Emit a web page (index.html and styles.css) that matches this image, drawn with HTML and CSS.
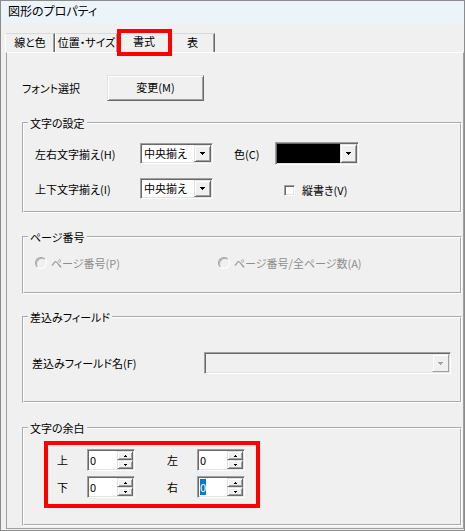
FILE: index.html
```html
<!DOCTYPE html>
<html lang="ja">
<head>
<meta charset="UTF-8">
<title>図形のプロパティ</title>
<link rel="stylesheet" href="styles.css">
</head>
<body>
<div class="window">
  <div class="titlebar">図形のプロパティ</div>
  <div class="client">
    <div class="tabs">
      <div class="tab tab-line">線と色</div>
      <div class="tab tab-pos">位置・サイズ</div>
      <div class="tab tab-format active">書式<span class="callout"></span></div>
      <div class="tab tab-table">表</div>
    </div>

    <div class="panel">
      <div class="font-row">
        <span class="font-label">フォント選択</span>
        <div class="button">変更(M)</div>
      </div>

      <fieldset class="group group-text">
        <legend>文字の設定</legend>
        <div class="row row-first">
          <span class="row-label">左右文字揃え(H)</span>
          <div class="combo align-combo">
            <span class="combo-value">中央揃え</span>
            <span class="drop"><svg width="5" height="3" viewBox="0 0 5 3"><path d="M0 0h5v1h-1v1h-1v1h-1v-1h-1v-1h-1z"/></svg></span>
          </div>
          <span class="color-label">色(C)</span>
          <div class="combo color-combo">
            <span class="swatch"></span>
            <span class="drop"><svg width="5" height="3" viewBox="0 0 5 3"><path d="M0 0h5v1h-1v1h-1v1h-1v-1h-1v-1h-1z"/></svg></span>
          </div>
        </div>
        <div class="row">
          <span class="row-label">上下文字揃え(I)</span>
          <div class="combo align-combo">
            <span class="combo-value">中央揃え</span>
            <span class="drop"><svg width="5" height="3" viewBox="0 0 5 3"><path d="M0 0h5v1h-1v1h-1v1h-1v-1h-1v-1h-1z"/></svg></span>
          </div>
          <span class="check"><span class="check-box"></span>縦書き(V)</span>
        </div>
      </fieldset>

      <fieldset class="group group-page">
        <legend>ページ番号</legend>
        <div class="radios">
          <span class="radio radio-first"><span class="radio-dot"></span>ページ番号(P)</span>
          <span class="radio"><span class="radio-dot"></span>ページ番号/全ページ数(A)</span>
        </div>
      </fieldset>

      <fieldset class="group group-field">
        <legend>差込みフィールド</legend>
        <div class="row field-row">
          <span class="field-label">差込みフィールド名(F)</span>
          <div class="combo field-combo disabled">
            <span class="combo-value"></span>
            <span class="drop"><svg width="5" height="3" viewBox="0 0 5 3"><path d="M0 0h5v1h-1v1h-1v1h-1v-1h-1v-1h-1z"/></svg></span>
          </div>
        </div>
      </fieldset>

      <fieldset class="group group-margin">
        <legend>文字の余白</legend>
        <div class="margins">
          <span class="margin-label">上</span>
          <div class="spin">
            <span class="spin-value">0</span>
            <span class="spin-btns">
              <span class="spin-btn"><svg width="3" height="2" viewBox="0 0 3 2"><path d="M1 0h1v1h1v1h-3v-1h1z"/></svg></span>
              <span class="spin-btn"><svg width="3" height="2" viewBox="0 0 3 2"><path d="M0 0h3v1h-1v1h-1v-1h-1z"/></svg></span>
            </span>
          </div>
          <span class="margin-label">左</span>
          <div class="spin">
            <span class="spin-value">0</span>
            <span class="spin-btns">
              <span class="spin-btn"><svg width="3" height="2" viewBox="0 0 3 2"><path d="M1 0h1v1h1v1h-3v-1h1z"/></svg></span>
              <span class="spin-btn"><svg width="3" height="2" viewBox="0 0 3 2"><path d="M0 0h3v1h-1v1h-1v-1h-1z"/></svg></span>
            </span>
          </div>
          <span class="margin-label">下</span>
          <div class="spin">
            <span class="spin-value">0</span>
            <span class="spin-btns">
              <span class="spin-btn"><svg width="3" height="2" viewBox="0 0 3 2"><path d="M1 0h1v1h1v1h-3v-1h1z"/></svg></span>
              <span class="spin-btn"><svg width="3" height="2" viewBox="0 0 3 2"><path d="M0 0h3v1h-1v1h-1v-1h-1z"/></svg></span>
            </span>
          </div>
          <span class="margin-label">右</span>
          <div class="spin">
            <span class="spin-value"><span class="selected">0</span></span>
            <span class="spin-btns">
              <span class="spin-btn"><svg width="3" height="2" viewBox="0 0 3 2"><path d="M1 0h1v1h1v1h-3v-1h1z"/></svg></span>
              <span class="spin-btn"><svg width="3" height="2" viewBox="0 0 3 2"><path d="M0 0h3v1h-1v1h-1v-1h-1z"/></svg></span>
            </span>
          </div>
        </div>
      </fieldset>
    </div>
  </div>
</div>
</body>
</html>
```

FILE: styles.css
```css
* {
  box-sizing: border-box;
}

body {
  margin: 0;
  background: #fff;
  font-family: "Noto Sans CJK JP", "Noto Sans", sans-serif;
  font-size: 11px;
  line-height: 14px;
  color: #000;
  font-feature-settings: "palt";
}

.window {
  width: 465px;
  height: 531px;
  border: 1px solid #8c8c8c;
  background: #f0f0f0;
  display: flex;
  flex-direction: column;
}

.titlebar {
  flex: none;
  height: 22px;
  padding-left: 7px;
  background: #ebf4f8;
  font-size: 12px;
  line-height: 19px;
}

.client {
  flex: 1;
  display: flex;
  flex-direction: column;
  padding: 0 0 1px 4px;
}

/* tab strip */
.tabs {
  flex: none;
  display: flex;
  align-items: flex-end;
  height: 29px;
  padding-top: 10px;
}

.tab {
  position: relative;
  height: 19px;
  background: #f0f0f0;
  border-top: 1px solid #d9d9d9;
  border-left: 1px solid #fff;
  border-right: 1px solid #696969;
  box-shadow: inset -1px 0 #a0a0a0;
  text-align: center;
  line-height: 17px;
}

.tab-line { width: 50px; }
.tab-pos { width: 63px; }
.tab-format { width: 52px; }
.tab-table { width: 45px; }

.tab.active {
  height: 22px;
  margin-bottom: -1px;
  z-index: 1;
  border-right-color: #a0a0a0;
  box-shadow: none;
  line-height: 18px;
}

.callout {
  position: absolute;
  left: -2px;
  top: -3px;
  width: 55px;
  height: 27px;
  border: 4px solid #ff0000;
}

/* page body */
.panel {
  flex: 1;
  display: flex;
  flex-direction: column;
  margin-left: 1px;
  padding: 0 1px 0 15px;
  border-top: 1px solid #fff;
  border-left: 1px solid #a0a0a0;
  border-right: 1px solid #a0a0a0;
  border-bottom: 1px solid #a0a0a0;
}

.font-row {
  display: flex;
  align-items: center;
  height: 26px;
  margin-top: 22px;
}

.font-label {
  width: 85px;
}

.button {
  width: 97px;
  height: 26px;
  border: 1px solid;
  border-color: #e3e3e3 #696969 #696969 #e3e3e3;
  box-shadow: inset 1px 1px #fff, inset -1px -1px #a0a0a0;
  text-align: center;
  line-height: 23px;
}

/* group boxes */
.group {
  margin: 0;
  padding: 0;
  min-width: 0;
  border: 2px groove #fff;
}

.group legend {
  margin-left: 4px;
  padding: 0 2px;
  line-height: 14px;
}

.group-text {
  height: 97px;
  margin-top: 15px;
}

.group-page {
  height: 64px;
  margin-top: 17px;
}

.group-field {
  height: 93px;
  margin-top: 16px;
}

.group-margin {
  height: 105px;
  margin-top: 18px;
}

.row {
  display: flex;
  align-items: center;
  height: 23px;
  margin: 12px 0 0 11px;
}

.row-label {
  width: 105px;
}

.color-label {
  width: 41px;
  margin-left: 21px;
}

/* combo boxes */
.combo {
  display: flex;
  height: 21px;
  padding: 1px;
  background: #fff;
  border: 1px solid;
  border-color: #a0a0a0 #fff #fff #a0a0a0;
  box-shadow: inset 1px 1px #696969, inset -1px -1px #e3e3e3;
}

.align-combo {
  width: 73px;
}

.color-combo {
  width: 84px;
  height: 23px;
}

.combo-value {
  flex: 1;
  padding-left: 2px;
  line-height: 17px;
}

.swatch {
  flex: 1;
  background: #000;
}

.drop {
  flex: none;
  width: 17px;
  display: flex;
  align-items: center;
  justify-content: center;
  background: #f0f0f0;
  border: 1px solid;
  border-color: #e3e3e3 #696969 #696969 #e3e3e3;
  box-shadow: inset 1px 1px #fff, inset -1px -1px #a0a0a0;
}

.drop svg {
  fill: #000;
}

.combo.disabled {
  background: #f0f0f0;
}

.combo.disabled .drop {
  border-color: #f0f0f0 #a0a0a0 #a0a0a0 #f0f0f0;
  box-shadow: inset 1px 1px #fff;
}

.combo.disabled .drop svg {
  fill: #a0a0a0;
}

.field-row {
  height: 22px;
  margin: 28px 0 0 8px;
}

.field-label {
  width: 172px;
}

.field-combo {
  width: 247px;
  height: 22px;
}

/* check box */
.check {
  display: flex;
  align-items: center;
  gap: 7px;
  margin-left: 71px;
  padding-top: 3px;
}

.check-box {
  width: 11px;
  height: 11px;
  background: #fff;
  border: 1px solid;
  border-color: #a0a0a0 #fff #fff #a0a0a0;
  box-shadow: inset 1px 1px #696969, inset -1px -1px #e3e3e3;
}

/* radio buttons (disabled) */
.radios {
  display: flex;
  margin: 12px 0 0 11px;
  color: #8d8d8d;
}

.radio {
  display: flex;
  align-items: center;
  gap: 4px;
}

.radio-first {
  width: 183px;
}

.radio-dot {
  width: 12px;
  height: 12px;
  border-radius: 50%;
  background: #f0f0f0;
  border: 1px solid;
  border-color: #a0a0a0 #fff #fff #a0a0a0;
  box-shadow: inset 1px 1px #b5b5b5;
}

/* margin spinners */
.margins {
  display: grid;
  grid-template-columns: 30px 80px 30px 48px;
  grid-template-rows: 22px 22px;
  row-gap: 5px;
  align-items: center;
  width: 216px;
  height: 67px;
  margin: 6px 0 0 20px;
  padding: 4px 0 0 9px;
  border: 4px solid #ff0000;
}

.spin {
  display: flex;
  width: 48px;
  height: 22px;
  padding: 1px;
  background: #fff;
  border: 1px solid;
  border-color: #a0a0a0 #fff #fff #a0a0a0;
  box-shadow: inset 1px 1px #696969, inset -1px -1px #e3e3e3;
}

.spin-value {
  flex: 1;
  padding-left: 1px;
  line-height: 18px;
}

.selected {
  background: #0078d7;
  color: #fff;
}

.spin-btns {
  flex: none;
  width: 16px;
  display: flex;
  flex-direction: column;
}

.spin-btn {
  flex: 1;
  display: flex;
  align-items: center;
  justify-content: center;
  background: #f0f0f0;
  border: 1px solid;
  border-color: #e3e3e3 #696969 #696969 #e3e3e3;
  box-shadow: inset 1px 1px #fff, inset -1px -1px #a0a0a0;
}

.spin-btn svg {
  fill: #000;
}
```
